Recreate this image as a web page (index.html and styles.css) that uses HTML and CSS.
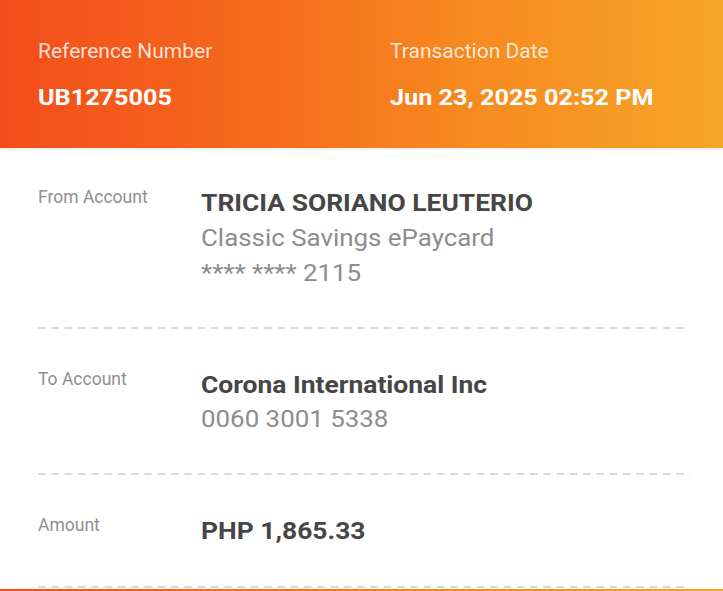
FILE: index.html
```html
<!DOCTYPE html>
<html>
<head>
<meta charset="utf-8">
<link rel="stylesheet" href="styles.css">
</head>
<body>
<div class="receipt">
  <header class="hero">
    <div class="hero-col ref">
      <div class="hero-label">Reference Number</div>
      <div class="hero-value">UB1275005</div>
    </div>
    <div class="hero-col date">
      <div class="hero-label">Transaction Date</div>
      <div class="hero-value">Jun 23, 2025 02:52 PM</div>
    </div>
  </header>
  <main class="details">
    <section class="row row-first">
      <div class="label">From Account</div>
      <div class="info">
        <div class="primary">TRICIA SORIANO LEUTERIO</div>
        <div class="secondary">Classic Savings ePaycard</div>
        <div class="secondary">**** **** 2115</div>
      </div>
    </section>
    <div class="dash"></div>
    <section class="row">
      <div class="label">To Account</div>
      <div class="info">
        <div class="primary">Corona International Inc</div>
        <div class="secondary">0060 3001 5338</div>
      </div>
    </section>
    <div class="dash"></div>
    <section class="row row-last">
      <div class="label">Amount</div>
      <div class="info">
        <div class="primary">PHP 1,865.33</div>
      </div>
    </section>
    <div class="dash"></div>
  </main>
  <div class="bottom-bar"></div>
</div>
</body>
</html>
```
FILE: styles.css
```css
html, body {
  margin: 0;
  padding: 0;
  background: #ffffff;
}
body {
  font-family: Roboto, "Liberation Sans", sans-serif;
  width: 723px;
  height: 591px;
  overflow: hidden;
}
.receipt {
  display: flex;
  flex-direction: column;
  height: 591px;
}
.hero {
  height: 148px;
  box-sizing: border-box;
  background: linear-gradient(90deg, #f34d1b 0%, #f5691d 35%, #f78a1f 65%, #f6a52a 100%);
  display: flex;
  padding: 39px 0 0 38px;
  box-shadow: 0 1px 3px rgba(0,0,0,0.10);
  flex-shrink: 0;
  position: relative;
  z-index: 1;
}
.hero-col.ref { width: 352px; }
.hero-label {
  color: rgba(255,255,255,0.82);
  font-size: 21px;
  line-height: 24px;
  white-space: nowrap;
}
.hero-value {
  color: #fff;
  font-weight: 700;
  font-size: 22.5px;
  line-height: 26px;
  margin-top: 21px;
  white-space: nowrap;
  transform: scaleX(1.12);
  transform-origin: left center;
}
.details {
  flex: 1;
  padding: 0 33px 0 38px;
  display: flex;
  flex-direction: column;
}
.row {
  display: flex;
  padding: 40px 0 36px;
}
.row-first { padding-top: 39px; }
.row-last { padding-bottom: 37px; }
.label {
  width: 163px;
  color: #8f8f8f;
  font-size: 17.5px;
  line-height: 20px;
  flex-shrink: 0;
}
.info {
  transform: scaleX(1.125);
  transform-origin: left center;
  white-space: nowrap;
}
.primary {
  color: #464646;
  font-weight: 700;
  font-size: 23.5px;
  line-height: 32px;
  margin-bottom: 1.5px;
}
.secondary {
  color: #8d8d8d;
  font-size: 23px;
  line-height: 35px;
}
.dash {
  height: 2px;
  flex-shrink: 0;
  background-image: linear-gradient(90deg, #d9d9d9 0 8px, transparent 8px 100%);
  background-size: 13.3px 2px;
  background-repeat: repeat-x;
}
.bottom-bar {
  height: 4px;
  margin-top: 1px;
  background: linear-gradient(90deg, #f34d1b, #f78a1f 65%, #f6a52a);
  flex-shrink: 0;
}
```
